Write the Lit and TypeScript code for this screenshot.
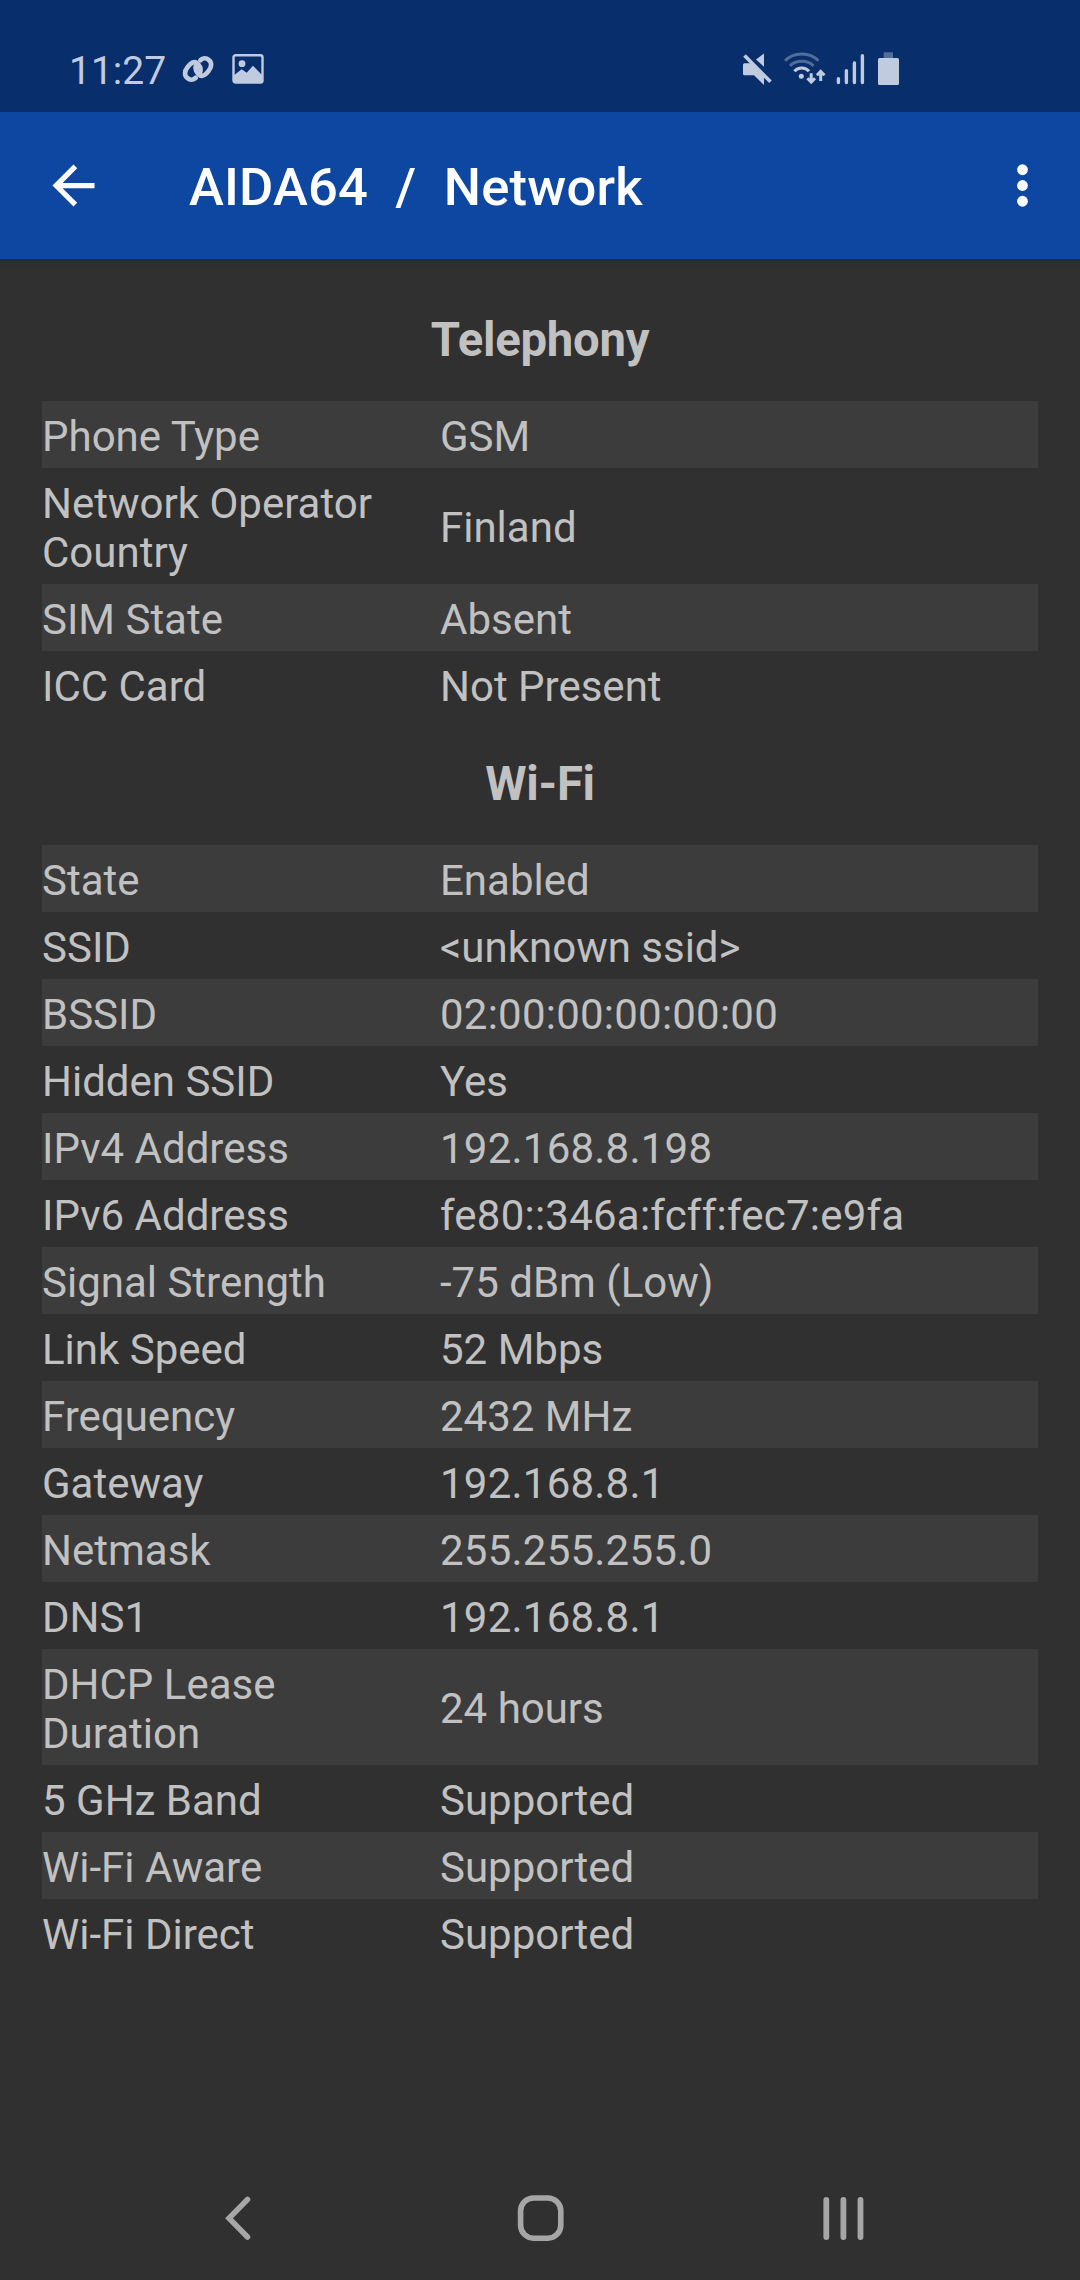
import { LitElement, html, css, svg } from "lit";
import { customElement, property } from "lit/decorators.js";
import { classMap } from "lit/directives/class-map.js";

type Row = [label: string, value: string];

const telephony: Row[] = [
  ["Phone Type", "GSM"],
  ["Network Operator Country", "Finland"],
  ["SIM State", "Absent"],
  ["ICC Card", "Not Present"],
];

const wifi: Row[] = [
  ["State", "Enabled"],
  ["SSID", "<unknown ssid>"],
  ["BSSID", "02:00:00:00:00:00"],
  ["Hidden SSID", "Yes"],
  ["IPv4 Address", "192.168.8.198"],
  ["IPv6 Address", "fe80::346a:fcff:fec7:e9fa"],
  ["Signal Strength", "-75 dBm (Low)"],
  ["Link Speed", "52 Mbps"],
  ["Frequency", "2432 MHz"],
  ["Gateway", "192.168.8.1"],
  ["Netmask", "255.255.255.0"],
  ["DNS1", "192.168.8.1"],
  ["DHCP Lease Duration", "24 hours"],
  ["5 GHz Band", "Supported"],
  ["Wi-Fi Aware", "Supported"],
  ["Wi-Fi Direct", "Supported"],
];

@customElement("status-bar")
export class StatusBar extends LitElement {
  static styles = css`
    :host {
      display: flex;
      justify-content: space-between;
      box-sizing: border-box;
      height: 112px;
      padding: 50px 180px 0 69px;
      background: #082e6b;
      color: #c1cbdf;
    }
    .side { display: flex; height: 40px; }
    .time {
      width: 112px;
      padding-top: 1px;
      font-size: 39px;
      line-height: 40px;
      white-space: nowrap;
    }
    svg { display: block; flex: none; }
    .link { margin-left: 1px; }
    .picture { margin-left: 17px; }
    .wifi { margin-left: 10px; }
    .signal { margin-left: 8px; }
    .battery { margin-left: 12px; }
  `;
  render() {
    const ring = "M17.800 23.500C19.300 20 18.500 17 16.500 14.800C14 11.300 11 11.300 8 14.300L5.500 17.300C2 21.500 2.500 26 5.500 28.200C8 30.200 11.500 30 13.800 27.800";
    return html`
      <div class="side">
        <span class="time">11:27</span>
        <svg class="link" width="32" height="40" viewBox="0 0 32 40" fill="none" stroke="currentColor" stroke-width="4.700" stroke-linecap="round">
          <path d=${ring}/>
          <path d=${ring} transform="rotate(180 16.100 19)"/>
        </svg>
        <svg class="picture" width="34" height="40" viewBox="0 0 34 40">
          <rect x="2.500" y="5.200" width="29" height="27.300" rx="2" fill="none" stroke="currentColor" stroke-width="2.400"/>
          <circle cx="11" cy="13.700" r="3.400" fill="currentColor"/>
          <path d="M3 25.200L10.700 19.300L15.700 22.700L22 15.700L31 25V32.500H3Z" fill="currentColor"/>
        </svg>
      </div>
      <div class="side">
        <svg width="32" height="40" viewBox="0 0 32 40">
          <path d="M2.500 13.300H9L22 26.500V35L12 25.300H2.500Q1 25.300 1 23.800V14.800Q1 13.300 2.500 13.300Z" fill="currentColor"/>
          <path d="M14 9.500L22 3.500V16.700Z" fill="currentColor"/>
          <path d="M2.500 5.500L28.500 31.800" stroke="currentColor" stroke-width="3.600"/>
        </svg>
        <svg class="wifi" width="43" height="40" viewBox="0 0 43 40" fill="none" stroke="currentColor" stroke-width="3">
          <path d="M1 10.800C10 1.800 25.500 1.800 34.500 10.800" opacity=".4"/>
          <path d="M6 15.900C12 9.800 23.500 9.800 29.500 15.900" opacity=".4"/>
          <path d="M10.400 21.200C14 16.800 21.500 16.800 25 21.200"/>
          <circle cx="17.300" cy="26.300" r="2.500" fill="currentColor" stroke="none"/>
          <path d="M27.200 23.300V32M23.400 28.300L27.200 32.200L31 28.300M36.700 31V22M32.900 25.300L36.700 21.400L40.500 25.300"/>
        </svg>
        <svg class="signal" width="30" height="40" viewBox="0 0 30 40" stroke="currentColor" stroke-width="3.400" stroke-linecap="round">
          <path d="M3.400 28.700V32.600M11.400 20.700V32.600M19.400 13V32.600M27.400 5.700V32.600"/>
        </svg>
        <svg class="battery" width="23" height="40" viewBox="0 0 23 40" fill="currentColor">
          <rect x="6.700" y="2.300" width="9.300" height="5.700" opacity=".4"/>
          <rect x="1" y="8" width="21" height="27" rx="1.600"/>
        </svg>
      </div>
    `;
  }
}

@customElement("app-bar")
export class AppBar extends LitElement {
  static styles = css`
    :host {
      display: flex;
      align-items: center;
      box-sizing: border-box;
      height: 147px;
      padding: 0 26px 0 42px;
      background: #0e47a1;
      color: #fff;
    }
    .title {
      flex: 1;
      margin: 0 0 0 84px;
      padding-top: 2px;
      font-size: 52.5px;
      font-weight: 500;
      line-height: 62px;
      letter-spacing: 0.2px;
      word-spacing: 0.5px;
      white-space: pre;
    }
    svg { display: block; }
  `;
  render() {
    return html`
      <svg width="63" height="63" viewBox="0 0 24 24" fill="currentColor"><path d="M20 11H7.830l5.590-5.590L12 4l-8 8 8 8 1.410-1.410L7.830 13H20v-2z"/></svg>
      <h1 class="title">AIDA64  /  Network</h1>
      <svg width="63" height="63" viewBox="0 0 24 24" fill="currentColor">
        <circle cx="12" cy="6" r="2.050"/><circle cx="12" cy="12" r="2.050"/><circle cx="12" cy="18" r="2.050"/>
      </svg>
    `;
  }
}

@customElement("info-section")
export class InfoSection extends LitElement {
  @property() heading = "";
  @property({ attribute: false }) rows: Row[] = [];
  static styles = css`
    :host { display: block; }
    .heading {
      margin: 0;
      padding: 39px 0 33px;
      font-size: 47.25px;
      font-weight: 700;
      line-height: 55px;
      letter-spacing: -0.25px;
      text-align: center;
    }
    .row {
      display: grid;
      grid-template-columns: 398px 1fr;
      align-items: center;
      padding: 11px 0 7px;
      font-size: 42px;
      line-height: 49px;
    }
    .row:nth-child(odd) { background: #3c3c3c; }
    .value { margin-top: -0.6px; }
    .numeric { letter-spacing: 0.23px; }
  `;
  render() {
    return html`
      <h2 class="heading">${this.heading}</h2>
      <div>
        ${this.rows.map(([label, value]) => html`
          <div class="row">
            <span>${label}</span>
            <span class=${classMap({ value: true, numeric: /^[\da-f]+[:.]/.test(value) })}>${value}</span>
          </div>
        `)}
      </div>
    `;
  }
}

@customElement("nav-bar")
export class NavBar extends LitElement {
  static styles = css`
    :host {
      display: flex;
      justify-content: space-between;
      align-items: center;
      box-sizing: border-box;
      height: 126px;
      padding: 2px 206px 0 208px;
      color: #a6a6a6;
    }
    svg { display: block; }
  `;
  render() {
    const bars = [12.300, 29.400, 46.500];
    return html`
      <svg width="60" height="60" viewBox="0 0 60 60" fill="none" stroke="currentColor" stroke-width="5.500" stroke-linecap="round"><path d="M39.500 11.500L21 30.200L39.500 49"/></svg>
      <svg width="60" height="60" viewBox="0 0 60 60" fill="none" stroke="currentColor" stroke-width="5.600"><rect x="9.600" y="10" width="40.200" height="40.200" rx="13"/></svg>
      <svg width="60" height="60" viewBox="0 0 60 60" stroke="currentColor" stroke-width="5.800" stroke-linecap="round">
        ${bars.map((x) => svg`<line x1=${x} x2=${x} y1="12" y2="49"/>`)}
      </svg>
    `;
  }
}

@customElement("app-root")
export class AppRoot extends LitElement {
  static styles = css`
    :host {
      display: flex;
      flex-direction: column;
      width: 1080px;
      height: 2280px;
      background: #303030;
      color: #c1c1c1;
      font-family: Roboto, sans-serif;
    }
    .content {
      flex: 1;
      padding: 15px 42px 0;
      background: linear-gradient(#2c2c2e, #303030 10px);
    }
  `;
  render() {
    return html`
      <status-bar></status-bar>
      <app-bar></app-bar>
      <main class="content">
        <info-section heading="Telephony" .rows=${telephony}></info-section>
        <info-section heading="Wi-Fi" .rows=${wifi}></info-section>
      </main>
      <nav-bar></nav-bar>
    `;
  }
}
